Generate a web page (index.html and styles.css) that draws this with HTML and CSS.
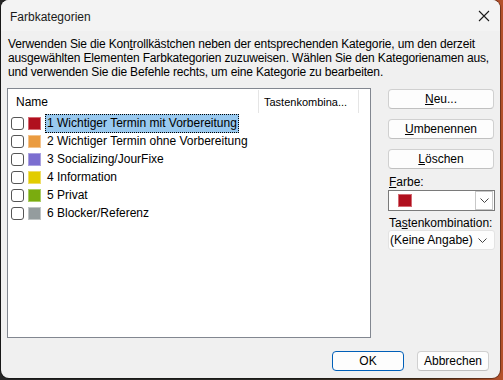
FILE: index.html
```html
<!DOCTYPE html>
<html lang="de">
<head>
<meta charset="utf-8">
<title>Farbkategorien</title>
<link rel="stylesheet" href="styles.css">
</head>
<body>
<div class="window">
  <div class="titlebar">
    <span class="title">Farbkategorien</span>
    <svg class="close" width="12" height="12" viewBox="0 0 12 12"><path d="M1 1 L11 11 M11 1 L1 11" stroke="#1a1a1a" stroke-width="1.1" fill="none"/></svg>
  </div>
  <div class="content">
    <p class="desc">Verwenden Sie die Kon<u>t</u>rollkästchen neben der entsprechenden Kategorie, um den derzeit<br>ausgewählten Elementen Farbkategorien zuzuweisen. Wählen Sie den Kategorienamen aus,<br>und verwenden Sie die Befehle rechts, um eine Kategorie zu bearbeiten.</p>
    <div class="main">
      <div class="list">
        <div class="list-head">
          <div class="col col-name">Name</div>
          <div class="col col-key">Tastenkombina...</div>
          <div class="col col-rest"></div>
        </div>
        <div class="row">
          <span class="check"></span><span class="swatch c-red"></span><span class="label selected">1 Wichtiger Termin mit Vorbereitung</span>
        </div>
        <div class="row">
          <span class="check"></span><span class="swatch c-orange"></span><span class="label">2 Wichtiger Termin ohne Vorbereitung</span>
        </div>
        <div class="row">
          <span class="check"></span><span class="swatch c-purple"></span><span class="label">3 Socializing/JourFixe</span>
        </div>
        <div class="row">
          <span class="check"></span><span class="swatch c-yellow"></span><span class="label">4 Information</span>
        </div>
        <div class="row">
          <span class="check"></span><span class="swatch c-green"></span><span class="label">5 Privat</span>
        </div>
        <div class="row">
          <span class="check"></span><span class="swatch c-gray"></span><span class="label">6 Blocker/Referenz</span>
        </div>
      </div>
      <div class="side">
        <button class="btn side-btn"><u>N</u>eu...</button>
        <button class="btn side-btn"><u>U</u>mbenennen</button>
        <button class="btn side-btn"><u>L</u>öschen</button>
        <div class="field-label first"><u>F</u>arbe:</div>
        <div class="colorbox">
          <span class="color-swatch"></span>
          <span class="arrowbox"><svg width="9" height="5" viewBox="0 0 9 5"><path d="M0.5 0.5 L4.5 4.5 L8.5 0.5" stroke="#444" stroke-width="1" fill="none"/></svg></span>
        </div>
        <div class="field-label">Ta<u>s</u>tenkombination:</div>
        <div class="combo">
          <span>(Keine Angabe)</span>
          <svg width="9" height="5" viewBox="0 0 9 5"><path d="M0.5 0.5 L4.5 4.5 L8.5 0.5" stroke="#444" stroke-width="1" fill="none"/></svg>
        </div>
      </div>
    </div>
    <div class="footer">
      <button class="btn foot-btn primary">OK</button>
      <button class="btn foot-btn">Abbrechen</button>
    </div>
  </div>
</div>
</body>
</html>
```

FILE: styles.css
```css
html, body {
  margin: 0;
  padding: 0;
}
body {
  width: 503px;
  height: 380px;
  overflow: hidden;
  background: linear-gradient(90deg, #262626 0%, #2a2a26 60%, #5a3a20 85%, #b5502a 100%);
  font-family: "Liberation Sans", Arial, sans-serif;
  font-size: 12px;
  line-height: 14px;
  color: #000;
}
.window {
  margin-left: 1px;
  width: 499px;
  height: 378px;
  background: #f0f0f0;
  border-radius: 8px;
  overflow: hidden;
  display: flex;
  flex-direction: column;
  box-shadow: 0 0 0 1px rgba(0,0,0,0.35);
}
.titlebar {
  height: 31px;
  flex: none;
  background: #f3f3f3;
  display: flex;
  align-items: center;
  justify-content: space-between;
  padding: 0 10px 0 9px;
}
.title {
  font-size: 12px;
  color: #1a1a1a;
  margin-top: 2px;
}
.close {
  margin-top: 1px;
}
.content {
  flex: 1;
  padding: 6px 5px 0 6px;
  display: flex;
  flex-direction: column;
}
.desc {
  margin: 0;
  height: 42px;
  line-height: 14px;
  font-size: 12px;
  letter-spacing: -0.15px;
  padding-left: 1px;
  white-space: nowrap;
}
.main {
  display: flex;
  flex: none;
  margin-top: 9px;
  gap: 17px;
  height: 250px;
}
.list {
  width: 362px;
  height: 248px;
  border: 1px solid #828790;
  background: #fff;
}
.list-head {
  display: flex;
  height: 24px;
  padding-top: 1px;
}
.col {
  padding-top: 5px;
  height: 23px;
  border-right: 1px solid #e5e5e5;
  box-sizing: border-box;
  white-space: nowrap;
}
.col-name {
  width: 251px;
  padding-left: 8px;
}
.col-key {
  width: 100px;
  padding-left: 5px;
  font-size: 11px;
}
.col-rest {
  flex: 1;
  border-right: none;
}
.row {
  display: flex;
  align-items: center;
  height: 18px;
  padding-left: 3px;
}
.check {
  width: 11px;
  height: 11px;
  border: 1px solid #555;
  border-radius: 3px;
  background: #fff;
  flex: none;
}
.swatch {
  width: 11px;
  height: 11px;
  margin-left: 4px;
  flex: none;
  border: 1px solid;
}
.c-red { background: #b00f1e; border-color: #d36a72; }
.c-orange { background: #ea9b40; border-color: #f3c38c; }
.c-purple { background: #7b6ed0; border-color: #aaa2e0; }
.c-yellow { background: #e2cc00; border-color: #eedd66; }
.c-green { background: #7aac0f; border-color: #aacc66; }
.c-gray { background: #949c9e; border-color: #c0c5c6; }
.label {
  margin-left: 4px;
  padding: 1px;
  line-height: 15px;
  height: 15px;
  border: 1px dotted transparent;
  white-space: nowrap;
}
.label.selected {
  background: #99c9ef;
  border-color: #000;
}
.side {
  width: 107px;
  display: flex;
  flex-direction: column;
}
.btn {
  font-family: inherit;
  font-size: 12px;
  color: #000;
  background: #fdfdfd;
  border: 1px solid #d0d0d0;
  border-bottom-color: #c0c0c0;
  border-radius: 4px;
  height: 20px;
  padding: 0;
  line-height: 18px;
  flex: none;
}
.side-btn {
  width: 106px;
  margin-top: 1px;
  margin-bottom: 9px;
}
.field-label {
  margin-top: -1px;
  height: 16px;
  line-height: 16px;
  padding-left: 1px;
  white-space: nowrap;
}
.field-label.first {
  margin-top: -4px;
}
.colorbox {
  width: 105px;
  height: 19px;
  border: 1px solid #7a7a7a;
  background: #fff;
  display: flex;
  align-items: center;
  justify-content: space-between;
  margin-top: 0;
  margin-bottom: 5px;
}
.color-swatch {
  width: 12px;
  height: 11px;
  background: #b00f1e;
  border: 1px solid #d36a72;
  margin-left: 9px;
}
.arrowbox {
  width: 16px;
  height: 17px;
  border: 1px solid #c8c8c8;
  margin-right: 1px;
  display: flex;
  align-items: center;
  justify-content: center;
  background: #fff;
}
.combo {
  width: 107px;
  height: 20px;
  box-sizing: border-box;
  border: 1px solid #e3e3e3;
  border-radius: 3px;
  background: #fdfdfd;
  display: flex;
  align-items: center;
  justify-content: space-between;
  padding: 0 7px 0 1px;
  margin-top: -1px;
  white-space: nowrap;
}
.footer {
  display: flex;
  flex: none;
  justify-content: flex-end;
  gap: 13px;
  margin-top: 13px;
  padding-right: 6px;
}
.foot-btn {
  width: 72px;
  height: 20px;
}
.foot-btn.primary {
  border: 1px solid #005fb8;
}
```
